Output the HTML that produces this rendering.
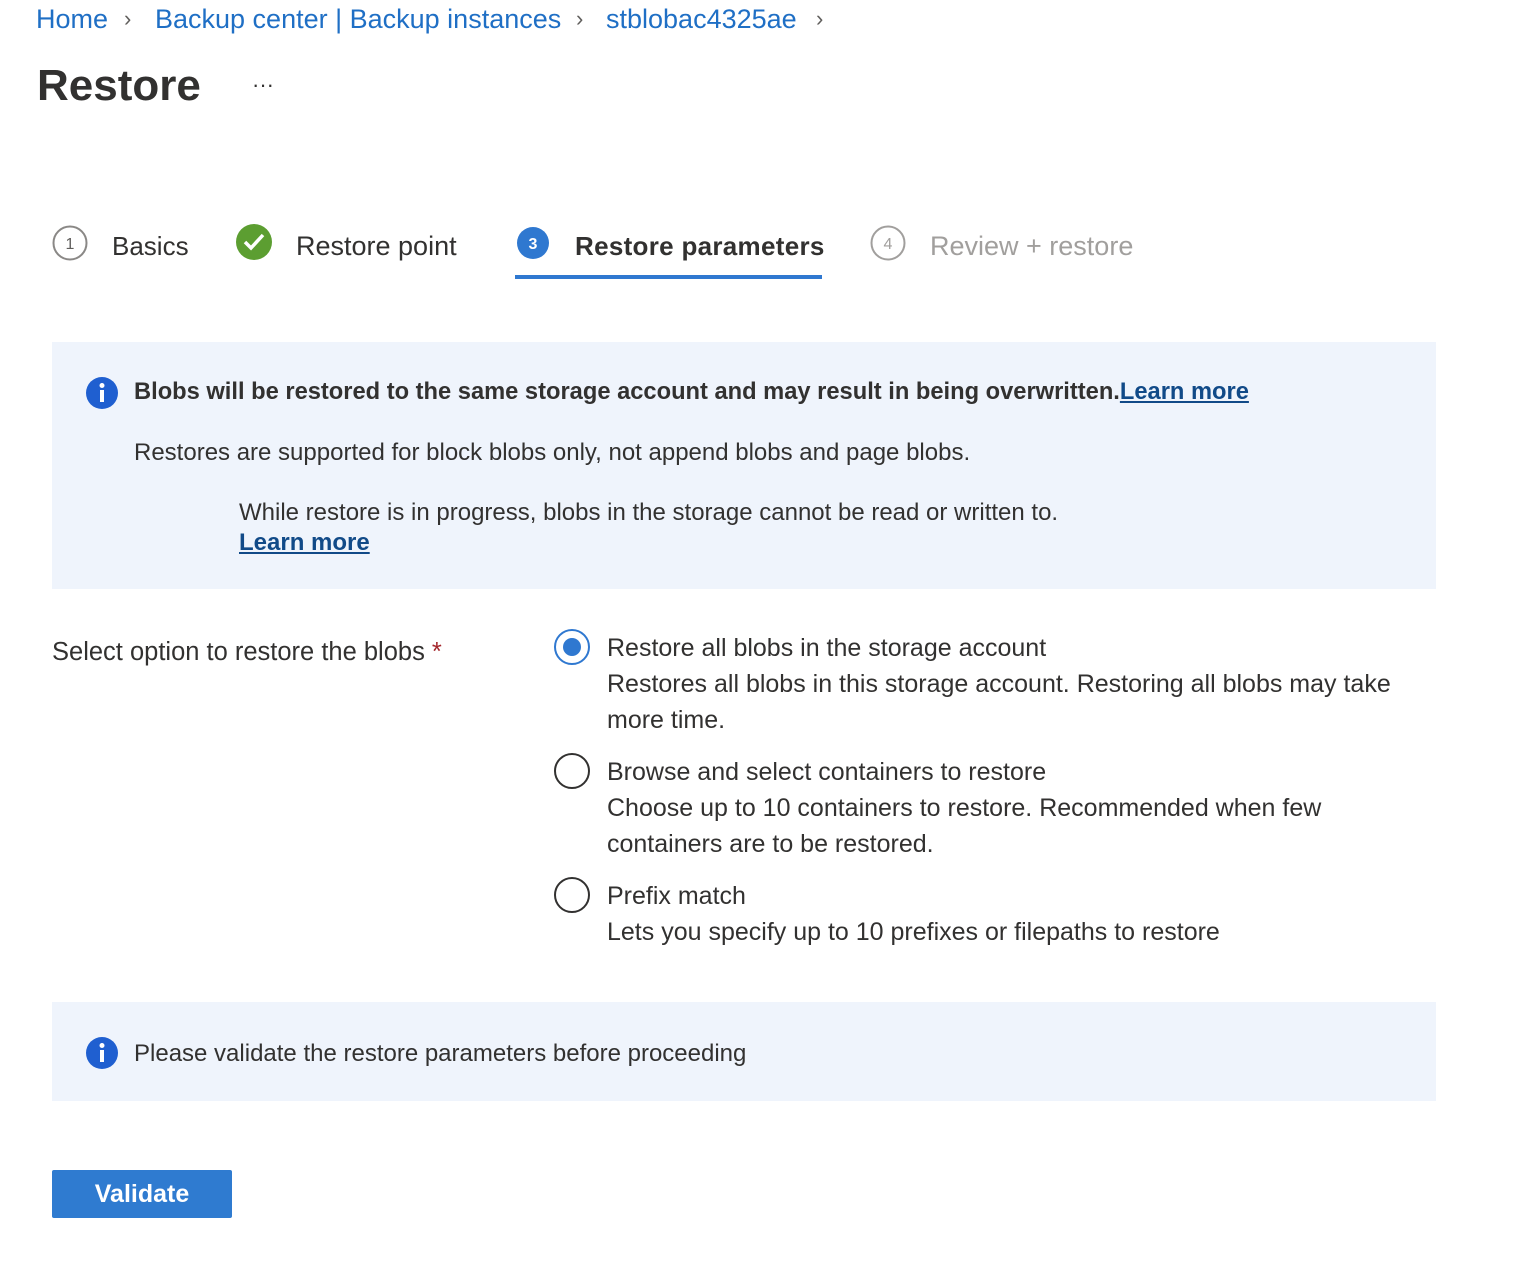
<!DOCTYPE html>
<html><head><meta charset="utf-8"><style>
*{margin:0;padding:0;box-sizing:border-box}
body{width:1526px;height:1266px;background:#fff;font-family:"Liberation Sans",sans-serif;color:#323130;position:relative;overflow:hidden}
.a{position:absolute;white-space:nowrap}
.bc{color:#1f6fc5;font-size:27px;top:4px}
.gt{color:#605e5c;font-size:22px}
.t{font-size:23px}
.box{position:absolute;left:52px;width:1384px;background:#eff4fc}
.lnk{color:#114a88;font-weight:bold;text-decoration:underline}
.radio{position:absolute;width:36px;height:36px;border:2px solid #323130;border-radius:50%;left:554px}
.ro{font-size:25px;line-height:36px;white-space:normal;width:830px}
</style></head><body>
<div class="a bc" style="left:36px">Home</div>
<div class="a gt" style="left:124px;top:6px">&#x203A;</div>
<div class="a bc" style="left:155px">Backup center | Backup instances</div>
<div class="a gt" style="left:576px;top:6px">&#x203A;</div>
<div class="a bc" style="left:606px">stblobac4325ae</div>
<div class="a gt" style="left:816px;top:6px">&#x203A;</div>
<div class="a" style="left:37px;top:61px;font-size:44px;font-weight:bold;color:#323130">Restore</div>
<div class="a" style="left:252px;top:72px;font-size:22px;color:#323130">···</div>

<svg class="a" style="left:52px;top:225px" width="36" height="36"><circle cx="18" cy="18" r="16.5" fill="none" stroke="#8a8886" stroke-width="2"/><text x="18" y="24" text-anchor="middle" font-size="16" fill="#605e5c" font-family="Liberation Sans">1</text></svg>
<div class="a t" style="left:112px;top:231px;font-size:26px">Basics</div>
<svg class="a" style="left:236px;top:224px" width="36" height="36"><circle cx="18" cy="18" r="18" fill="#5c9e31"/><path d="M9 18l6 6 12-13" fill="none" stroke="#fff" stroke-width="3.5"/></svg>
<div class="a t" style="left:296px;top:231px;font-size:27px">Restore point</div>
<svg class="a" style="left:515px;top:225px" width="36" height="36"><circle cx="18" cy="18" r="16" fill="#2f78d0"/><text x="18" y="24" text-anchor="middle" font-size="16" font-weight="bold" fill="#fff" font-family="Liberation Sans">3</text></svg>
<div class="a t" style="left:575px;top:231px;font-size:26px;font-weight:bold;letter-spacing:0.3px">Restore parameters</div>
<div class="a" style="left:515px;top:275px;width:307px;height:4px;background:#2f78d0"></div>
<svg class="a" style="left:870px;top:225px" width="36" height="36"><circle cx="18" cy="18" r="16.5" fill="none" stroke="#a19f9d" stroke-width="2"/><text x="18" y="24" text-anchor="middle" font-size="16" fill="#a19f9d" font-family="Liberation Sans">4</text></svg>
<div class="a t" style="left:930px;top:231px;font-size:27px;color:#a19f9d">Review + restore</div>

<div class="box" style="top:342px;height:247px"></div>
<svg class="a" style="left:85px;top:376px" width="34" height="34"><circle cx="17" cy="17" r="16" fill="#1f5fd0"/><circle cx="17" cy="9.5" r="2.5" fill="#fff"/><rect x="15" y="14" width="4" height="12" fill="#fff"/></svg>
<div class="a t" style="left:134px;top:379px;font-weight:bold;font-size:23.7px">Blobs will be restored to the same storage account and may result in being overwritten.<span class="lnk">Learn more</span></div>
<div class="a t" style="left:134px;top:439px;font-size:24px">Restores are supported for block blobs only, not append blobs and page blobs.</div>
<div class="a t" style="left:239px;top:499px;font-size:24px">While restore is in progress, blobs in the storage cannot be read or written to.</div>
<div class="a t lnk" style="left:239px;top:529px;font-size:24px">Learn more</div>

<div class="a t" style="left:52px;top:638px;font-size:25.5px">Select option to restore the blobs <span style="color:#a4262c">*</span></div>
<div class="radio" style="top:629px;border-color:#2f78d0"><div style="position:absolute;left:7px;top:7px;width:18px;height:18px;border-radius:50%;background:#2f78d0"></div></div>
<div class="a ro" style="left:607px;top:630px">Restore all blobs in the storage account<br>Restores all blobs in this storage account. Restoring all blobs may take more time.</div>
<div class="radio" style="top:753px"></div>
<div class="a ro" style="left:607px;top:754px;width:780px">Browse and select containers to restore<br>Choose up to 10 containers to restore. Recommended when few containers are to be restored.</div>
<div class="radio" style="top:877px"></div>
<div class="a ro" style="left:607px;top:878px">Prefix match<br>Lets you specify up to 10 prefixes or filepaths to restore</div>

<div class="box" style="top:1002px;height:99px"></div>
<svg class="a" style="left:85px;top:1036px" width="34" height="34"><circle cx="17" cy="17" r="16" fill="#1f5fd0"/><circle cx="17" cy="9.5" r="2.5" fill="#fff"/><rect x="15" y="14" width="4" height="12" fill="#fff"/></svg>
<div class="a t" style="left:134px;top:1040px;font-size:24px">Please validate the restore parameters before proceeding</div>

<div class="a" style="left:52px;top:1170px;width:180px;height:48px;background:#2f7bd0;border-radius:2px;color:#fff;font-weight:bold;font-size:25px;text-align:center;line-height:48px">Validate</div>
</body></html>
